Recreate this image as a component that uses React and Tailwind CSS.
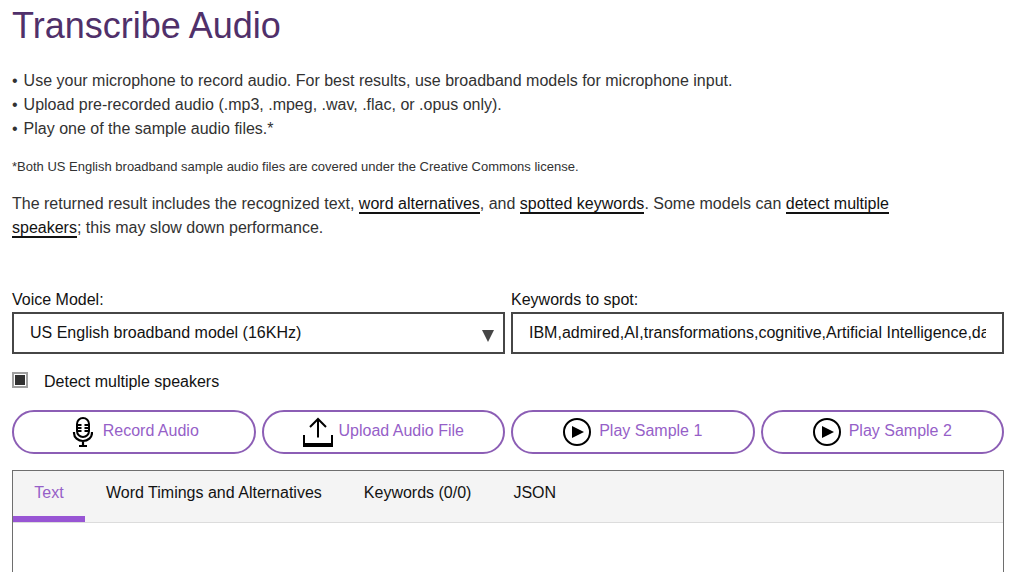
import React, { useState } from 'react';

const tabs = ['Text', 'Word Timings and Alternatives', 'Keywords (0/0)', 'JSON'];

const MicIcon = () => (
  <svg width="24" height="30" viewBox="-4 0 24 30" fill="none" stroke="#000" strokeWidth="2" aria-hidden="true">
    <rect x="4" y="1" width="12" height="19" rx="6" />
    <path d="M1 15v1a9 8 0 0 0 18 0v-1M10 24v5M6 29h8" strokeWidth="2.2" />
    <path d="M5 8h3.500M5 11h3.500M5 14h3.500M11.500 8h3.500M11.500 11h3.500M11.500 14h3.500" strokeWidth="1.8" />
  </svg>
);

const UploadIcon = () => (
  <svg width="30" height="30" viewBox="0 0 30 30" fill="none" stroke="#000" strokeWidth="2" aria-hidden="true">
    <path d="M15 2v18.500M7 10l8-8 8 8" />
    <path d="M1 18v11M29 18v11" />
    <path d="M0 28h30" strokeWidth="4" />
  </svg>
);

const PlayIcon = () => (
  <svg width="28" height="28" viewBox="0 0 28 28" fill="none" aria-hidden="true">
    <circle cx="14" cy="14" r="13" stroke="#000" strokeWidth="2" />
    <path d="M9 8l12 6-12 6z" fill="#000" />
  </svg>
);

const ActionButton = ({ icon, gap = 'gap-2', children }) => (
  <button
    type="button"
    className={`flex h-11 items-center justify-center rounded-full border-2 border-[#8c5eb5] pb-[2px] text-[#965fc8] ${gap}`}
  >
    <span className="mt-[2px]">{icon}</span>
    <span>{children}</span>
  </button>
);

const InfoLink = ({ children }) => (
  <a href="#info" className="border-b-2 border-[#121212] text-[#121212]">
    {children}
  </a>
);

const App = () => {
  const [activeTab, setActiveTab] = useState('Text');
  const [detectSpeakers, setDetectSpeakers] = useState(true);
  const [keywords, setKeywords] = useState(
    'IBM,admired,AI,transformations,cognitive,Artificial Intelligence,data,predict,learn'
  );

  return (
    <main className="flex min-h-screen flex-col bg-white pr-[13px] pl-3 font-['Liberation_Sans',Arial,sans-serif] text-base text-[#121212]">
      <h1 className="text-4xl leading-[52px] text-[#50306a]">Transcribe Audio</h1>

      <ul className="mt-[17px] text-[#323232]">
        <li className="flex gap-[6px]">
          <span>•</span>
          Use your microphone to record audio. For best results, use broadband models for microphone input.
        </li>
        <li className="flex gap-[6px]">
          <span>•</span>
          Upload pre-recorded audio (.mp3, .mpeg, .wav, .flac, or .opus only).
        </li>
        <li className="flex gap-[6px]">
          <span>•</span>
          Play one of the sample audio files.*
        </li>
      </ul>

      <p className="mt-4 text-[13px] leading-5 text-[#323232]">
        *Both US English broadband sample audio files are covered under the Creative Commons license.
      </p>

      <p className="mt-[15px] max-w-[900px] text-[#323232]">
        The returned result includes the recognized text, <InfoLink>word alternatives</InfoLink>, and{' '}
        <InfoLink>spotted keywords</InfoLink>. Some models can <InfoLink>detect multiple speakers</InfoLink>; this may
        slow down performance.
      </p>

      <div className="mt-12 grid grid-cols-2 gap-[6px]">
        <div>
          <label htmlFor="model" className="block">Voice Model:</label>
          <div className="relative">
            <select
              id="model"
              className="h-[42px] w-full appearance-none rounded-none border-2 border-[#464646] bg-white px-4"
            >
              <option>US English broadband model (16KHz)</option>
            </select>
            <svg
              className="pointer-events-none absolute right-[11px] bottom-3 h-3 w-3"
              viewBox="0 0 12 12"
              aria-hidden="true"
            >
              <path d="M0 0h12L6 12z" fill="#464646" />
            </svg>
          </div>
        </div>
        <div>
          <label htmlFor="keywords" className="block">Keywords to spot:</label>
          <input
            type="text"
            id="keywords"
            className="h-[42px] w-full border-2 border-[#464646] bg-white px-4"
            value={keywords}
            onChange={(e) => setKeywords(e.target.value)}
          />
        </div>
      </div>

      <div className="mt-4 flex items-start gap-4">
        <input
          type="checkbox"
          id="speakers"
          className="mt-[2px] h-4 w-4 appearance-none border-2 border-[#a0a0a0] bg-white p-px checked:bg-[#323232] checked:bg-clip-content"
          checked={detectSpeakers}
          onChange={(e) => setDetectSpeakers(e.target.checked)}
        />
        <label htmlFor="speakers">Detect multiple speakers</label>
      </div>

      <div className="mt-4 grid grid-cols-4 gap-[6px]">
        <ActionButton icon={<MicIcon />} gap="gap-[10px]">Record Audio</ActionButton>
        <ActionButton icon={<UploadIcon />} gap="gap-[6px]">Upload Audio File</ActionButton>
        <ActionButton icon={<PlayIcon />}>Play Sample 1</ActionButton>
        <ActionButton icon={<PlayIcon />}>Play Sample 2</ActionButton>
      </div>

      <section className="mt-4 flex-1 border border-b-0 border-[#6e6e6e]">
        <div role="tablist" className="flex border-b border-[#dcdcdc] bg-[#f4f4f4]">
          {tabs.map((tab) => (
            <button
              key={tab}
              type="button"
              role="tab"
              aria-selected={activeTab === tab}
              onClick={() => setActiveTab(tab)}
              className={`min-w-[72px] border-b-[6px] px-[21px] pt-[10px] pb-[11px] ${
                activeTab === tab ? 'border-[#9855d4] text-[#965fc8]' : 'border-transparent'
              }`}
            >
              {tab}
            </button>
          ))}
        </div>
        <div role="tabpanel" className="p-4"></div>
      </section>
    </main>
  );
};

export default App;
